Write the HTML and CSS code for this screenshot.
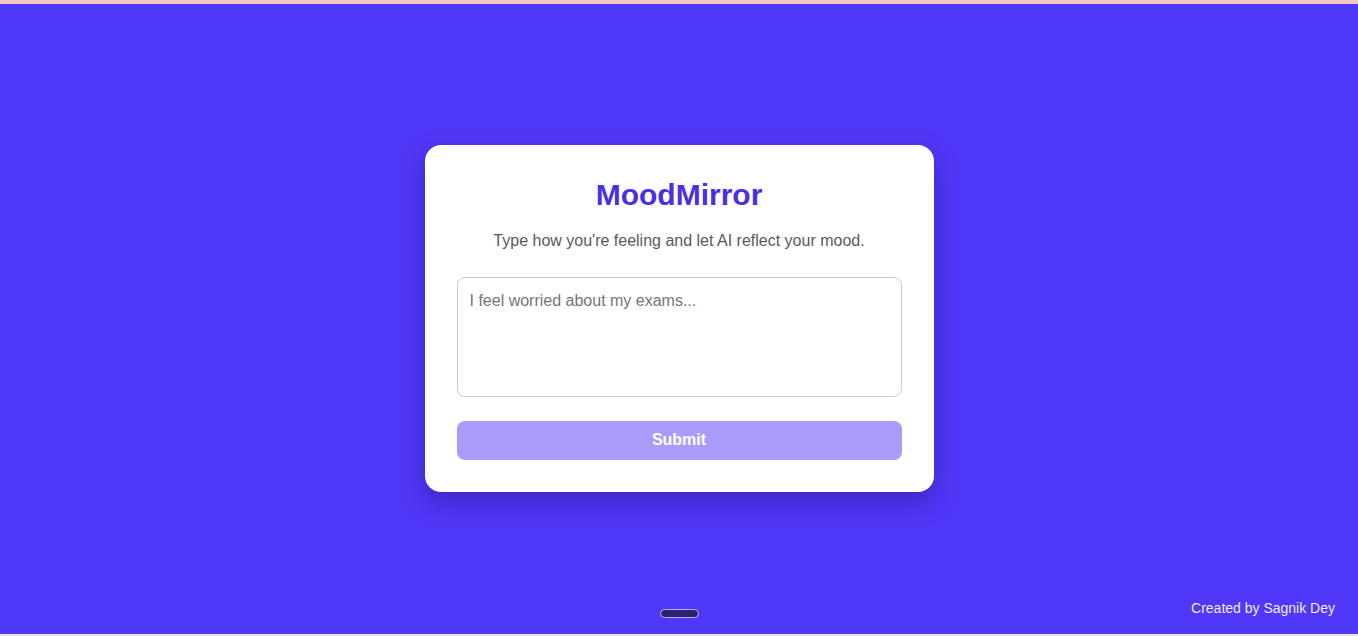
FILE: index.html
```html
<!DOCTYPE html>
<html lang="en">
<head>
<meta charset="utf-8">
<title>MoodMirror</title>
<link rel="stylesheet" href="styles.css">
</head>
<body>
<div class="topbar"></div>
<main class="stage">
  <div class="card">
    <h1 class="title">MoodMirror</h1>
    <p class="subtitle">Type how you're feeling and let AI reflect your mood.</p>
    <textarea class="mood-input" placeholder="I feel worried about my exams..."></textarea>
    <button class="submit" type="button">Submit</button>
  </div>
</main>
<div class="pill"></div>
<footer class="credit">Created by Sagnik Dey</footer>
<div class="bottombar"></div>
</body>
</html>
```
FILE: styles.css
```css
* { box-sizing: border-box; }
html, body { margin: 0; padding: 0; }
body {
  width: 1358px;
  height: 636px;
  overflow: hidden;
  background: #5038f8;
  font-family: "Liberation Sans", Arial, sans-serif;
  display: flex;
  flex-direction: column;
  position: relative;
}
.topbar {
  height: 4px;
  background: #f2c6c8;
  flex: none;
}
.stage {
  flex: 1;
  display: flex;
  justify-content: center;
  padding-top: 141px;
}
.card {
  width: 509px;
  height: 347px;
  background: #ffffff;
  border-radius: 16px;
  padding: 32px;
  display: flex;
  flex-direction: column;
  box-shadow: 0 10px 25px rgba(20, 10, 90, 0.35);
}
.title {
  margin: 0;
  text-align: center;
  font-size: 30px;
  line-height: 36px;
  font-weight: 700;
  color: #4a2fe3;
}
.subtitle {
  margin: 16px 0 0;
  text-align: center;
  font-size: 16px;
  line-height: 24px;
  color: #5a5a5a;
}
.mood-input {
  margin-top: 24px;
  width: 100%;
  height: 121px;
  border: 1px solid #cccccc;
  border-radius: 8px;
  padding: 12px;
  font-family: "Liberation Sans", Arial, sans-serif;
  font-size: 16px;
  line-height: 22px;
  resize: none;
  outline: none;
  color: #333;
}
.mood-input::placeholder { color: #757575; }
.submit {
  margin-top: 24px;
  width: 100%;
  height: 40px;
  border: none;
  border-radius: 8px;
  background: #a99cf8;
  color: #ffffff;
  font-family: "Liberation Sans", Arial, sans-serif;
  font-size: 16px;
  font-weight: 700;
}
.pill {
  position: absolute;
  left: 660px;
  top: 609px;
  width: 39px;
  height: 9px;
  border-radius: 5px;
  background: #2a2372;
  border: 1px solid #b9b4f0;
}
.credit {
  position: absolute;
  right: 23px;
  top: 600px;
  font-size: 14px;
  line-height: 16px;
  color: #eeeaff;
}
.bottombar {
  position: absolute;
  left: 0;
  right: 0;
  bottom: 0;
  height: 2px;
  background: #e6e4ee;
}
```
